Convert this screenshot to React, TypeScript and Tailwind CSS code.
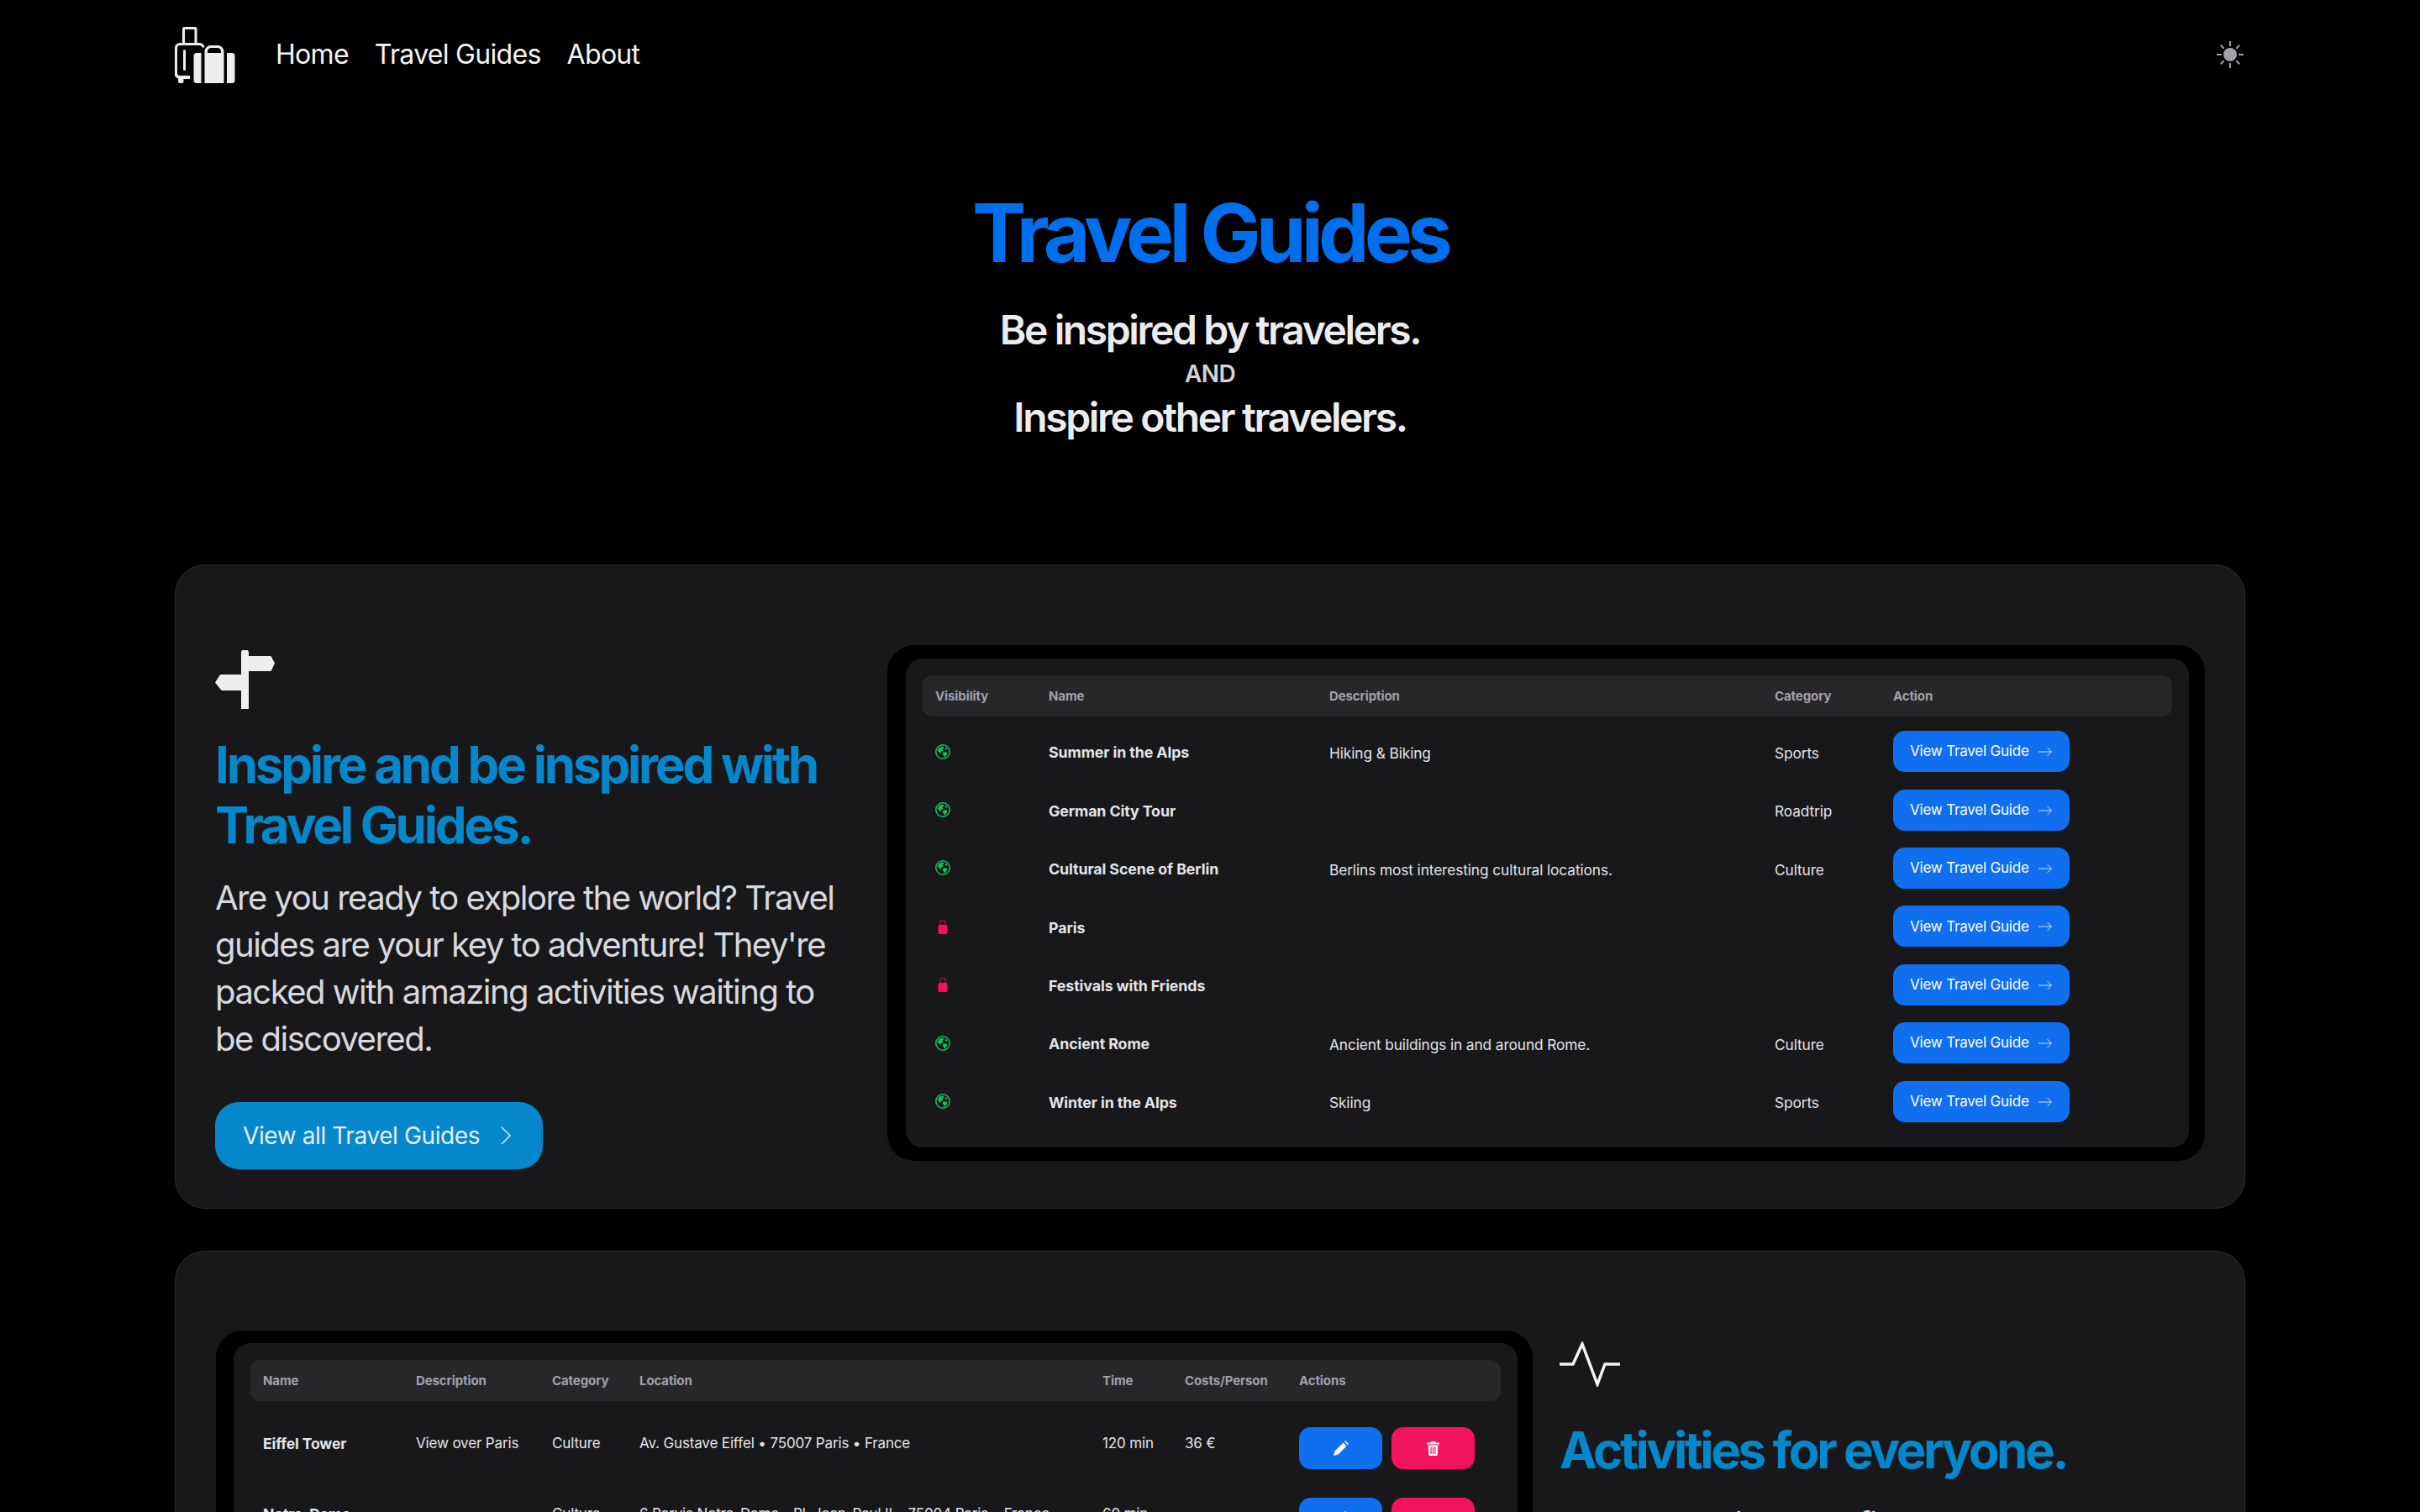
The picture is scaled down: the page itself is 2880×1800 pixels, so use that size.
import React from 'react';

const inter = 'font-["Inter",sans-serif]';

const guides = [
  { name: 'Summer in the Alps', description: 'Hiking & Biking', category: 'Sports', open: true },
  { name: 'German City Tour', description: '', category: 'Roadtrip', open: true },
  { name: 'Cultural Scene of Berlin', description: 'Berlins most interesting cultural locations.', category: 'Culture', open: true },
  { name: 'Paris', description: '', category: '', open: false },
  { name: 'Festivals with Friends', description: '', category: '', open: false },
  { name: 'Ancient Rome', description: 'Ancient buildings in and around Rome.', category: 'Culture', open: true },
  { name: 'Winter in the Alps', description: 'Skiing', category: 'Sports', open: true },
];

const activities = [
  { name: 'Eiffel Tower', description: 'View over Paris', category: 'Culture', location: 'Av. Gustave Eiffel • 75007 Paris • France', time: '120 min', costs: '36 €' },
  { name: 'Notre-Dame', description: '', category: 'Culture', location: '6 Parvis Notre-Dame - Pl. Jean-Paul II • 75004 Paris • France', time: '60 min', costs: '' },
];

const LuggageLogo = () => (
  <svg viewBox="0 0 72 67" className="w-[72px] h-[67px] text-[#eceef0]" fill="currentColor">
    <path fillRule="evenodd" d="M9 19V2.5A2.5 2.5 0 0 1 11.5 0H24a2.500 2.500 0 0 1 2.500 2.500V19h3a6 6 0 0 1 6 5.500h-3a3 3 0 0 0-3-2.500H6a3 3 0 0 0-3 3v30a3 3 0 0 0 3 3h12v4h-7.500v3a2 2 0 0 1-2 2H6a2 2 0 0 1-2-2v-3.500A6 6 0 0 1 0 55V25a6 6 0 0 1 6-6zM12 3v16h11.500V3z" />
    <rect x="10" y="27" width="3" height="25" rx="1.500" />
    <path d="M26 31h5.500v36H26a3.500 3.500 0 0 1-3.500-3.500v-29A3.500 3.500 0 0 1 26 31z" />
    <path fillRule="evenodd" d="M35.500 67V29.500A7.500 7.500 0 0 1 43 22h8a7.500 7.500 0 0 1 7.500 7.500V67zM39 31h16v-1.500a4.500 4.500 0 0 0-4-4.500h-8a4.500 4.500 0 0 0-4 4.500z" />
    <path d="M62 31h6a3.500 3.500 0 0 1 3.500 3.500v29A3.500 3.500 0 0 1 68 67h-6z" />
  </svg>
);

const SunIcon = () => (
  <svg viewBox="0 0 32 32" className="w-8 h-8 text-[#a1a1aa]">
    <circle cx="16" cy="16" r="8" fill="currentColor" />
    <path stroke="currentColor" strokeWidth="2" d="M16 0v6M16 26v6M0 16h6M26 16h6M4.700 4.700l4 4M23.300 23.300l4 4M4.700 27.300l4-4M23.300 8.700l4-4" />
  </svg>
);

const SignpostIcon = () => (
  <svg viewBox="0 0 71 70" className="w-[71px] h-[70px] text-[#eceef0]" fill="currentColor">
    <path d="M31 3a4.500 4.500 0 0 1 9 0v4h25.500a1.500 1.500 0 0 1 1.400.800L71 15.500l-4 8.800a1.500 1.500 0 0 1-1.400.700H40v45h-9V48H8.500a2 2 0 0 1-1.700-1L0 38.500 5.500 30a2 2 0 0 1 1.700-1H31z" />
  </svg>
);

const ActivityIcon = () => (
  <svg viewBox="0 0 72 54" className="w-[72px] h-[54px] text-[#f4f4f5]" fill="none" stroke="currentColor" strokeWidth="3.500" strokeMiterlimit="10">
    <path d="M0 27h16l11-24 18 48 9-24h18" />
  </svg>
);

const Globe = () => (
  <svg viewBox="0 0 18 18" className="w-[18px] h-[18px] text-[#1db95c]" fill="currentColor">
    <path fillRule="evenodd" d="M9 0a9 9 0 1 1 0 18A9 9 0 0 1 9 0zm0 1.500a7.500 7.500 0 1 0 0 15 7.500 7.500 0 0 0 0-15z" />
    <path d="M5 3.500 9.500 2.500l1 1.500-2 2 1 1.500-2.500 1.500-.5 2L4 9 2.700 7.500zM10.500 9l4 1-1 3-2.500 3-1-2.500-1.500-2.500zM12.500 3.500 15 6l-2 .8-1.500-1.500z" />
  </svg>
);

const Lock = () => (
  <svg viewBox="0 0 12 18" className="w-3 h-[18px]" fill="none">
    <path d="M3 9V4.500a3 3 0 0 1 6 0V9" stroke="#9c1745" strokeWidth="1.400" />
    <rect x="0.500" y="7" width="11" height="11" rx="2" fill="#f31260" />
  </svg>
);

const Pencil = () => (
  <svg viewBox="0 0 18 18" className="w-[18px] h-[18px] text-white" fill="currentColor">
    <path d="M11.500 2.500 15.500 6.500 5.500 16.500 0 18l1.500-5.500zM13 1l1-1 4 4-1 1.200z" />
  </svg>
);

const Trash = () => (
  <svg viewBox="0 0 15 17" className="w-[15px] h-[17px] text-white" fill="currentColor">
    <path fillRule="evenodd" d="M5 0h5l1 1.500h3.500a.5.500 0 0 1 0 2H.5a.5.500 0 0 1 0-2H4zM1.500 4.500h12l-.8 11a1.500 1.500 0 0 1-1.500 1.500H3.800a1.500 1.500 0 0 1-1.500-1.500zm3 2v8.500h1.200V6.500zm2.400 0v8.500h1.200V6.500zm2.400 0v8.500h1.200V6.500z" />
  </svg>
);

function GuidesTable() {
  return (
    <div className="bg-black rounded-[32px] pt-4 pb-4 pl-[22px] pr-[19px] flex-1 min-w-0">
      <div className="bg-[#18181b] rounded-[20px] px-5 pt-5 h-[582px]">
        <div className="h-[49px] pt-[2px] bg-[#27272a] rounded-xl grid grid-cols-[135px_334px_530px_141px_1fr] items-center pl-[15px] text-[15px] font-bold text-[#a1a1aa] tracking-[-0.1px]">
          <span>Visibility</span>
          <span>Name</span>
          <span>Description</span>
          <span>Category</span>
          <span>Action</span>
        </div>
        <div className="pt-[7px]">
          {guides.map((g) => (
            <div key={g.name} className="h-[69.4px] pt-[4px] grid grid-cols-[135px_334px_530px_141px_1fr] items-center pl-[15px] text-[17.3px] tracking-[-0.1px] text-[#e4e4e7]">
              <span className="flex -mt-[4px]">{g.open ? <Globe /> : <span className="pl-[3px]"><Lock /></span>}</span>
              <span className="font-bold text-[17.8px]">{g.name}</span>
              <span>{g.description}</span>
              <span>{g.category}</span>
              <span className="w-[210px] h-[49px] -mt-[4px] pt-[1px] rounded-[14px] bg-[#0f6fee] text-white text-[17px] flex items-center pl-5 gap-[11px] tracking-[-0.2px]">
                View Travel Guide
                <svg viewBox="0 0 16 12" className="w-4 h-3 text-[#cfe1fb]" fill="none" stroke="currentColor" strokeWidth="1">
                  <path d="M0 6h15M10.500 1 15.500 6l-5 5" />
                </svg>
              </span>
            </div>
          ))}
        </div>
      </div>
    </div>
  );
}

function ActivitiesTable() {
  return (
    <div className="bg-black rounded-[32px] pt-[15px] pl-[21px] pr-[18px] w-[1567px] shrink-0 h-[300px]">
      <div className="bg-[#18181b] rounded-[20px] px-5 pt-5 h-[400px]">
        <div className="h-[49px] pt-[2px] bg-[#27272a] rounded-xl grid grid-cols-[182px_162px_104px_551px_98px_136px_1fr] items-center pl-[15px] text-[15px] font-bold text-[#a1a1aa] tracking-[-0.1px]">
          <span>Name</span>
          <span>Description</span>
          <span>Category</span>
          <span>Location</span>
          <span>Time</span>
          <span>Costs/Person</span>
          <span>Actions</span>
        </div>
        <div className="pt-[8px]">
          {activities.map((a) => (
            <div key={a.name} className="h-[84px] pt-[2px] grid grid-cols-[182px_162px_104px_551px_98px_136px_1fr] items-center pl-[15px] text-[17px] tracking-[-0.15px] text-[#e4e4e7]">
              <span className="font-bold text-[17.6px]">{a.name}</span>
              <span>{a.description}</span>
              <span>{a.category}</span>
              <span className="whitespace-nowrap">{a.location}</span>
              <span>{a.time}</span>
              <span>{a.costs}</span>
              <span className="flex gap-[11px] mt-[10px]">
                <span className="w-[99px] h-[50px] rounded-[14px] bg-[#0f6fee] flex items-center justify-center"><Pencil /></span>
                <span className="w-[99px] h-[50px] rounded-[14px] bg-[#f31260] flex items-center justify-center"><Trash /></span>
              </span>
            </div>
          ))}
        </div>
      </div>
    </div>
  );
}

export default function App() {
  return (
    <div className={`${inter} h-[1800px] overflow-hidden bg-black text-white`}>
      <div className="w-[2464px] mx-auto">
        {/* nav */}
        <nav className="h-[130px] flex items-center">
          <LuggageLogo />
          <div className="flex gap-[31px] ml-[48px] text-[32px] tracking-[-0.7px] text-[#f4f4f5]">
            <span>Home</span>
            <span>Travel Guides</span>
            <span>About</span>
          </div>
          <div className="ml-auto mr-[2px]"><SunIcon /></div>
        </nav>

        {/* hero */}
        <div className="text-center pt-[99px] h-[542px]">
          <h1 className="text-[96px] leading-[96px] font-bold tracking-[-5.8px] text-[#006fee]">Travel Guides</h1>
          <p className="mt-[38px] text-[48px] leading-[60px] font-semibold tracking-[-2.4px] text-[#ececee]">Be inspired by travelers.</p>
          <p className="text-[28px] leading-[44px] font-semibold tracking-[-0.6px] text-[#d4d4d8]">AND</p>
          <p className="text-[48px] leading-[60px] font-semibold tracking-[-2.4px] text-[#ececee]">Inspire other travelers.</p>
        </div>

        {/* guides card */}
        <section className="h-[767px] bg-[#18181b] border border-[#2e2e32] rounded-[36px] flex items-start gap-[56px] pl-[47px] pr-[47px] pt-[95px]">
          <div className="w-[744px] shrink-0 pt-[6px]">
            <SignpostIcon />
            <h2 className="mt-[30px] text-[60px] leading-[72px] font-bold tracking-[-3.2px] text-[#0587cc]">Inspire and be inspired with Travel Guides.</h2>
            <p className="mt-[23px] text-[40px] leading-[56px] font-normal tracking-[-1.5px] text-[#d9d9dd]">Are you ready to explore the world? Travel guides are your key to adventure! They're packed with amazing activities waiting to be discovered.</p>
            <div className="mt-[47px] w-[390px] h-[80px] rounded-[28px] bg-[#0587cc] text-[#e6eef4] text-[28px] tracking-[-0.4px] flex items-center pl-[33px] gap-[25px]">
              View all Travel Guides
              <svg viewBox="0 0 14 24" className="w-[13px] h-[22px]" fill="none" stroke="currentColor" strokeWidth="1.600">
                <path d="M1 1l11 11L1 23" />
              </svg>
            </div>
          </div>
          <GuidesTable />
        </section>

        {/* activities card */}
        <section className="mt-[50px] h-[500px] bg-[#18181b] border border-[#2e2e32] rounded-[36px] flex gap-[32px] pl-[48px] pt-[94px]">
          <ActivitiesTable />
          <div className="pt-[13px]">
            <ActivityIcon />
            <h2 className="mt-[39px] text-[60px] leading-[72px] font-bold tracking-[-3.4px] text-[#0587cc] whitespace-nowrap">Activities for everyone.</h2>
            <p className="mt-[25px] text-[40px] leading-[56px] font-normal tracking-[-1.5px] text-[#d9d9dd]">Many great ideas to find</p>
          </div>
        </section>
      </div>
    </div>
  );
}
